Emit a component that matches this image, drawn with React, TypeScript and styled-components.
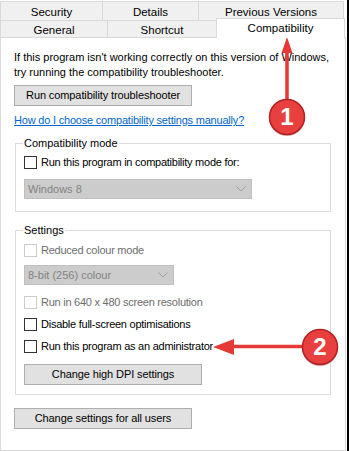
import React from 'react';
import styled, { createGlobalStyle } from 'styled-components';

const GlobalStyle = createGlobalStyle`
  html, body {
    margin: 0;
    padding: 0;
    background: #fff;
  }
  body {
    font-family: "Liberation Sans", Arial, sans-serif;
    font-size: 11px;
    color: #000;
  }
  * { box-sizing: border-box; }
`;

const FONT = `"Liberation Sans", Arial, sans-serif`;

const Window = styled.div`
  position: relative;
  width: 349px;
  height: 451px;
  background: #fff;
  border-right: 2px solid #000;
  overflow: hidden;
  font-family: ${FONT};
  font-size: 11px;
`;

const Sheet = styled.div`
  width: 346px;
  height: 451px;
  display: flex;
  flex-direction: column;
`;

const TabStrip = styled.div`
  margin-top: 1px;
  display: flex;
  flex-direction: column;
`;

const TabRow = styled.div`
  display: flex;
  align-items: flex-end;
`;

const Tab = styled.div<{ $w: number; $active?: boolean; $h: number }>`
  width: ${p => p.$w}px;
  height: ${p => p.$h}px;
  display: flex;
  align-items: center;
  justify-content: center;
  padding-top: ${p => (p.$active ? 0 : 2)}px;
  background: ${p => (p.$active ? '#fff' : '#f0f0f0')};
  border: 1px solid #d9d9d9;
  border-bottom: none;
  margin-right: -1px;
  line-height: 15px;
  font-size: 11.5px;
  white-space: nowrap;
  ${p => p.$active && `
    position: relative;
    z-index: 1;
    margin-top: -2px;
    margin-bottom: -1px;
  `}
`;

const Pane = styled.div`
  flex: 1;
  border: 1px solid #d9d9d9;
  padding: 12px 0 0 13px;
  display: flex;
  flex-direction: column;
  align-items: flex-start;
`;

const Intro = styled.p`
  margin: 0;
  line-height: 15px;
  white-space: nowrap;
`;

const Button = styled.div<{ $w: number; $mt: number }>`
  width: ${p => p.$w}px;
  height: 21px;
  margin-top: ${p => p.$mt}px;
  background: #e1e1e1;
  border: 1px solid #adadad;
  display: flex;
  align-items: center;
  justify-content: center;
  line-height: 15px;
  letter-spacing: -0.1px;
`;

const Link = styled.a`
  margin-top: 7px;
  color: #0066cc;
  text-decoration: underline;
  line-height: 15px;
  letter-spacing: -0.2px;
`;

const Group = styled.fieldset<{ $mt: number; $h: number }>`
  width: 316px;
  height: ${p => p.$h}px;
  margin: ${p => p.$mt}px 0 0 1px;
  padding: 2px 8px 0 8px;
  border: 1px solid #dcdcdc;
  display: flex;
  flex-direction: column;
  align-items: flex-start;
  min-width: 0;
`;

const Legend = styled.legend`
  padding: 0 1px;
  margin-left: -1px;
  line-height: 15px;
`;

const CheckRow = styled.div<{ $mt: number; $disabled?: boolean }>`
  display: flex;
  align-items: center;
  gap: 4px;
  margin-top: ${p => p.$mt}px;
  height: 15px;
  line-height: 15px;
  letter-spacing: -0.25px;
  color: ${p => (p.$disabled ? '#6d6d6d' : '#000')};
`;

const Box = styled.span<{ $disabled?: boolean }>`
  width: 13px;
  height: 13px;
  background: #fff;
  border: 1px solid ${p => (p.$disabled ? '#cccccc' : '#333333')};
`;

const Select = styled.div<{ $w: number; $mt: number }>`
  width: ${p => p.$w}px;
  height: 20px;
  margin-top: ${p => p.$mt}px;
  background: #cccccc;
  border: 1px solid #bfbfbf;
  color: #838383;
  display: flex;
  align-items: center;
  justify-content: space-between;
  padding: 0 5px 0 3px;
  line-height: 15px;
`;

const Overlay = styled.svg`
  position: absolute;
  left: 0;
  top: 0;
  pointer-events: none;
`;

const Chevron = () => (
  <svg width="10" height="6" viewBox="0 0 10 6">
    <path d="M0.5 0.5 L5 5 L9.5 0.5" fill="none" stroke="#a0a0a0" strokeWidth="1" />
  </svg>
);

const Check: React.FC<{ label: string; mt: number; disabled?: boolean }> = ({ label, mt, disabled }) => (
  <CheckRow $mt={mt} $disabled={disabled}>
    <Box $disabled={disabled} />
    <span>{label}</span>
  </CheckRow>
);

const Badge: React.FC<{ cx: number; cy: number; n: string }> = ({ cx, cy, n }) => (
  <g>
    <circle cx={cx} cy={cy + 1} r="18" fill="#8c1c1c" opacity="0.35" />
    <circle cx={cx} cy={cy} r="17.5" fill="#e8403f" stroke="#b32222" strokeWidth="1.5" />
    <text
      x={cx}
      y={cy + 8}
      textAnchor="middle"
      fill="#fff"
      fontFamily="'Liberation Sans', Arial, sans-serif"
      fontWeight="bold"
      fontSize="24"
    >
      {n}
    </text>
  </g>
);

const App: React.FC = () => {
  return (
    <Window>
      <GlobalStyle />
      <Sheet>
        <TabStrip>
          <TabRow>
            <Tab $w={103} $h={19}>Security</Tab>
            <Tab $w={97} $h={19}>Details</Tab>
            <Tab $w={146} $h={19}>Previous Versions</Tab>
          </TabRow>
          <TabRow>
            <Tab $w={108} $h={17}>General</Tab>
            <Tab $w={110} $h={17}>Shortcut</Tab>
            <Tab $w={129} $h={20} $active>Compatibility</Tab>
          </TabRow>
        </TabStrip>
        <Pane>
          <Intro>
            If this program isn't working correctly on this version of Windows,
            <br />
            try running the compatibility troubleshooter.
          </Intro>
          <Button $w={178} $mt={5}>Run compatibility troubleshooter</Button>
          <Link>How do I choose compatibility settings manually?</Link>

          <Group $mt={8} $h={76}>
            <Legend>Compatibility mode</Legend>
            <Check label="Run this program in compatibility mode for:" mt={2} />
            <Select $w={228} $mt={9}>
              <span>Windows 8</span>
              <Chevron />
            </Select>
          </Group>

          <Group $mt={11} $h={172}>
            <Legend>Settings</Legend>
            <Check label="Reduced colour mode" mt={3} disabled />
            <Select $w={150} $mt={7}>
              <span>8-bit (256) colour</span>
              <Chevron />
            </Select>
            <Check label="Run in 640 x 480 screen resolution" mt={10} disabled />
            <Check label="Disable full-screen optimisations" mt={7} />
            <Check label="Run this program as an administrator" mt={7} />
            <Button $w={178} $mt={10}>Change high DPI settings</Button>
          </Group>

          <Button $w={178} $mt={13}>Change settings for all users</Button>
        </Pane>
      </Sheet>

      <Overlay width="349" height="451" viewBox="0 0 349 451">
        <line x1="287" y1="50" x2="287" y2="102" stroke="#e53935" strokeWidth="3.5" />
        <polygon points="287,37 281.5,53 292.5,53" fill="#e53935" />
        <Badge cx={287} cy={117} n="1" />

        <line x1="230" y1="346.5" x2="304" y2="346.5" stroke="#e53935" strokeWidth="3.5" />
        <polygon points="213,347 234,339 234,355" fill="#e53935" />
        <Badge cx={320} cy={347} n="2" />
      </Overlay>
    </Window>
  );
};

export default App;
